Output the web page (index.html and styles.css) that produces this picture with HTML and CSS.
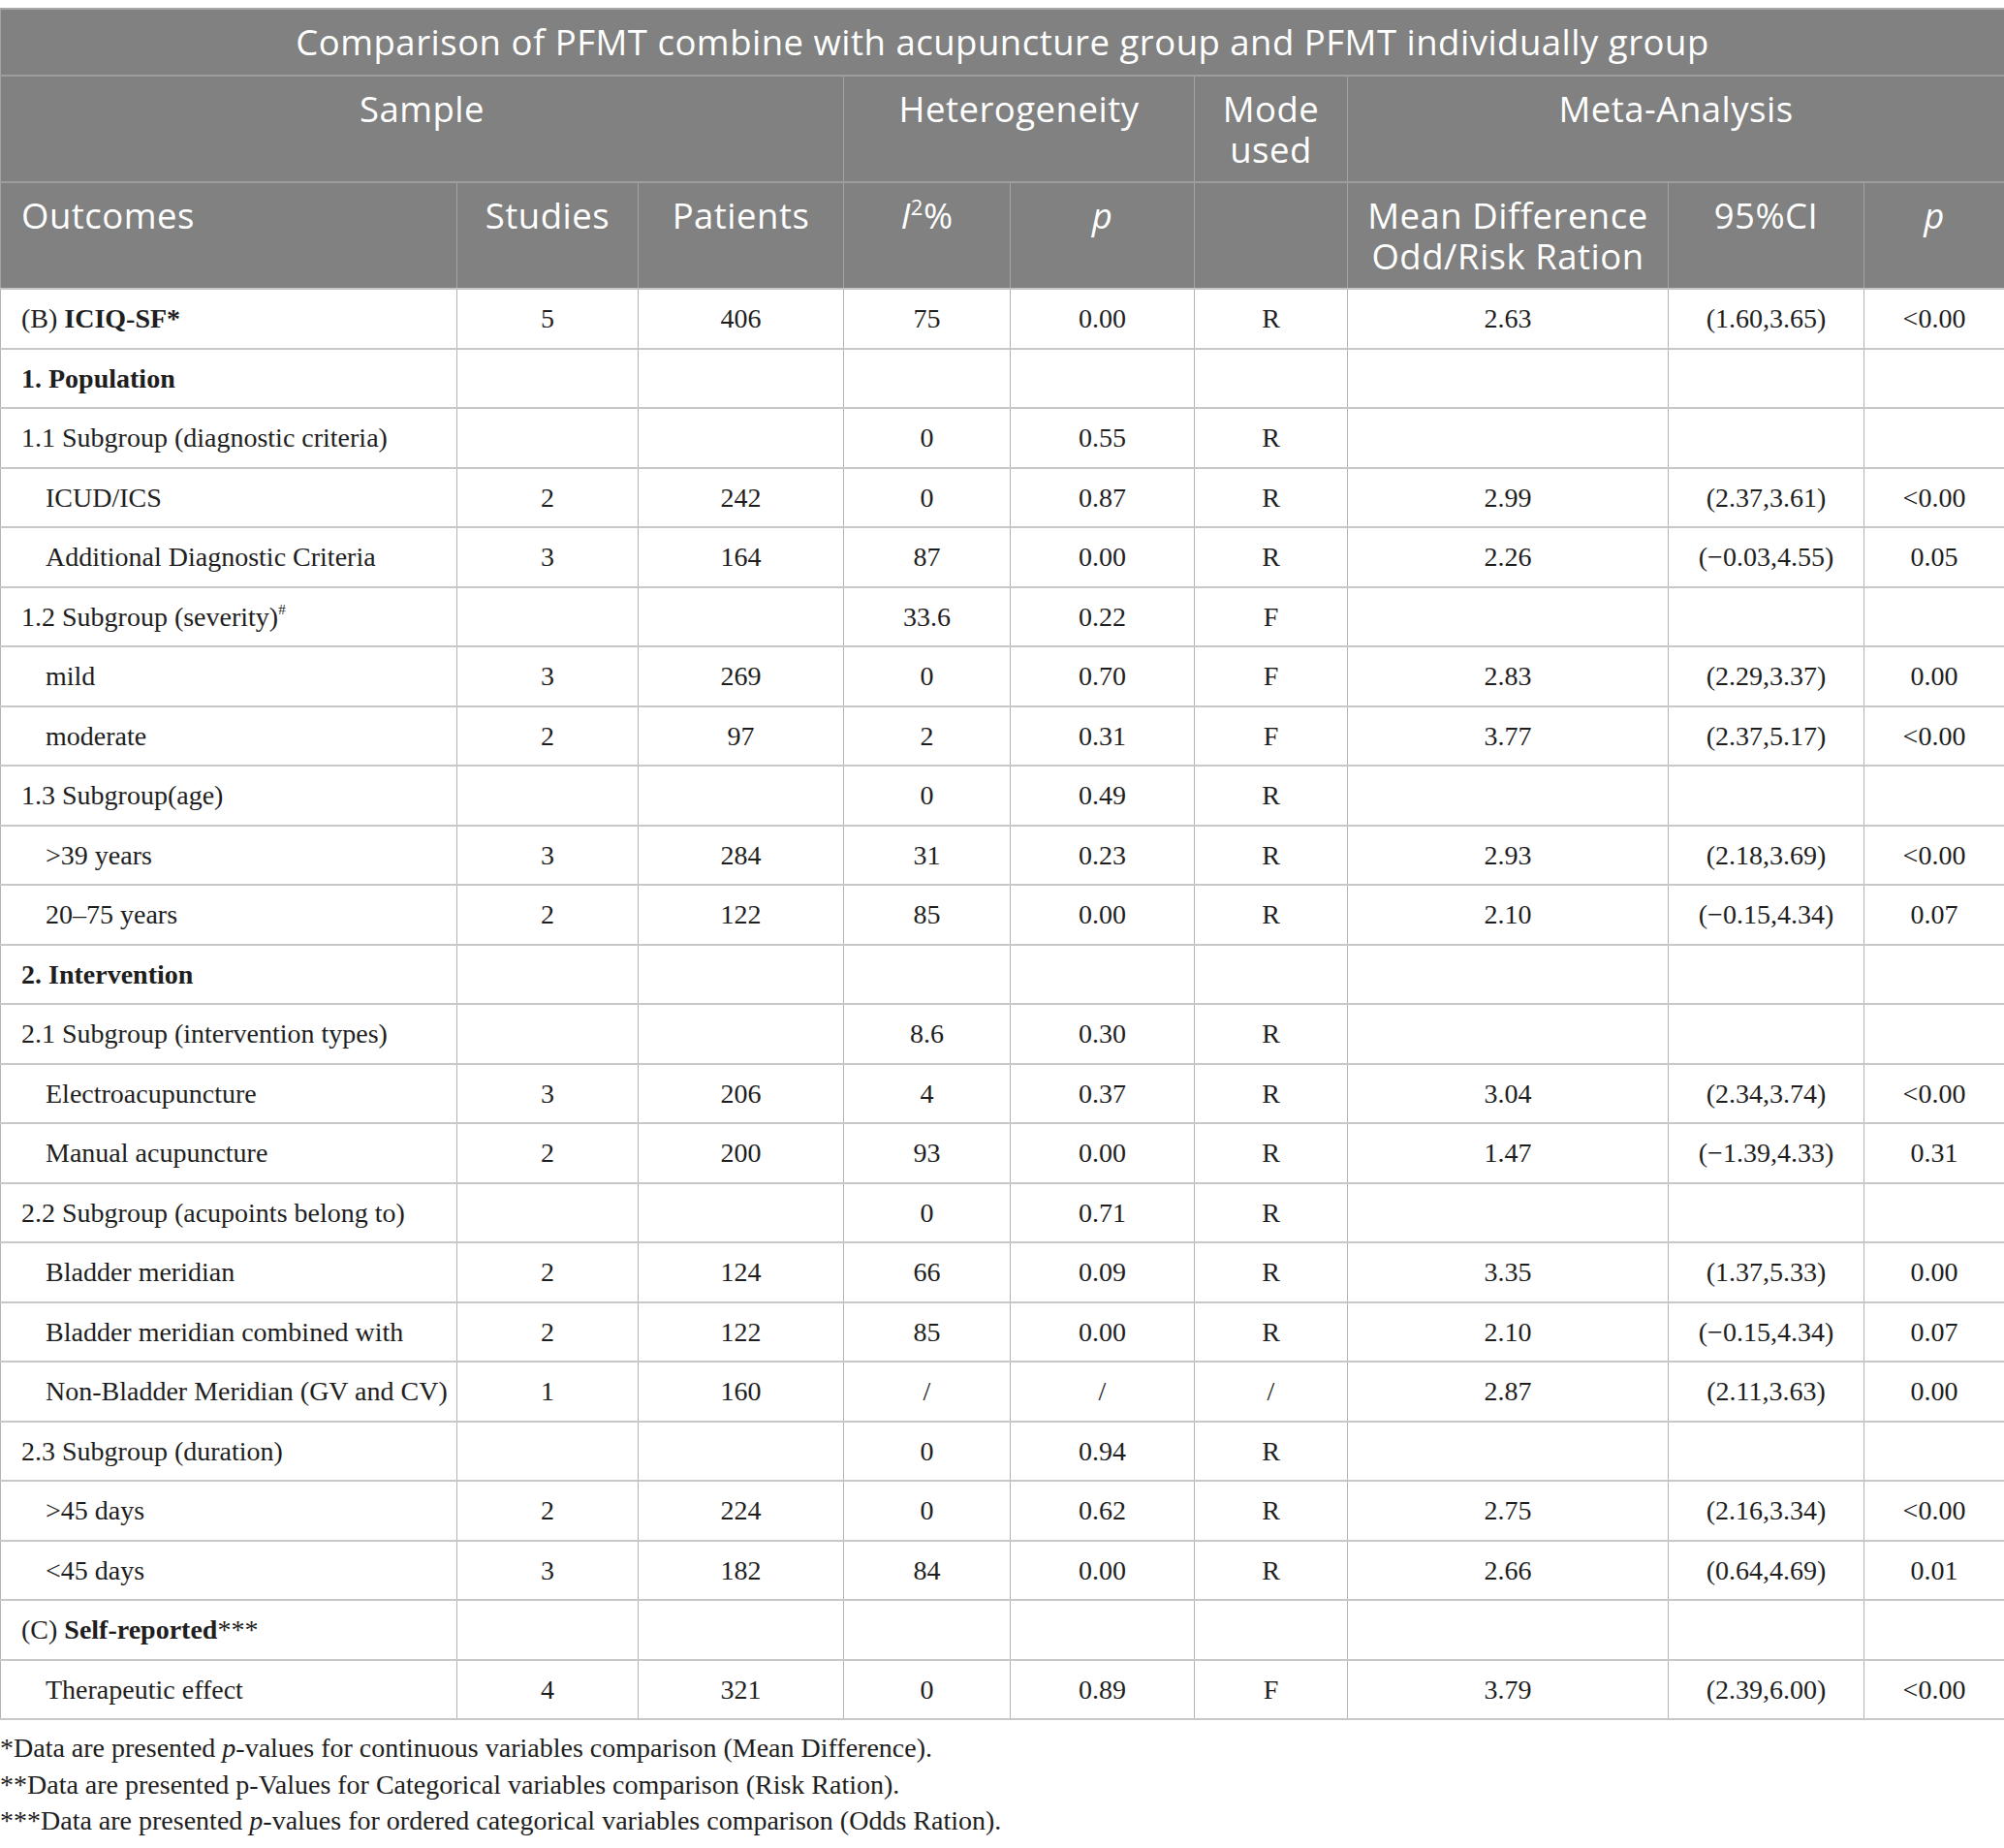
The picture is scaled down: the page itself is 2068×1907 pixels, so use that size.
FILE: index.html
```html
<!DOCTYPE html>
<html lang="en">
<head>
<meta charset="utf-8">
<title>Comparison of PFMT combine with acupuncture group and PFMT individually group</title>
<link rel="stylesheet" href="styles.css">
</head>
<body>
<div class="page">
<table class="meta">
  <colgroup>
    <col class="c-out"><col class="c-stu"><col class="c-pat"><col class="c-i2"><col class="c-p"><col class="c-mode"><col class="c-md"><col class="c-ci"><col class="c-p2">
  </colgroup>
  <thead>
    <tr class="h-title"><th colspan="9">Comparison of PFMT combine with acupuncture group and PFMT individually group</th></tr>
    <tr class="h-group">
      <th colspan="3">Sample</th>
      <th colspan="2">Heterogeneity</th>
      <th>Mode<br>used</th>
      <th colspan="3">Meta-Analysis</th>
    </tr>
    <tr class="h-cols">
      <th class="left">Outcomes</th>
      <th>Studies</th>
      <th>Patients</th>
      <th><i>I</i><sup>2</sup>%</th>
      <th><i>p</i></th>
      <th></th>
      <th>Mean Difference<br>Odd/Risk Ration</th>
      <th>95%CI</th>
      <th><i>p</i></th>
    </tr>
  </thead>
  <tbody>
    <tr><td class="lab">(B) <b>ICIQ-SF*</b></td><td>5</td><td>406</td><td>75</td><td>0.00</td><td>R</td><td>2.63</td><td>(1.60,3.65)</td><td>&lt;0.00</td></tr>
    <tr><td class="lab"><b>1. Population</b></td><td></td><td></td><td></td><td></td><td></td><td></td><td></td><td></td></tr>
    <tr><td class="lab">1.1 Subgroup (diagnostic criteria)</td><td></td><td></td><td>0</td><td>0.55</td><td>R</td><td></td><td></td><td></td></tr>
    <tr><td class="lab ind">ICUD/ICS</td><td>2</td><td>242</td><td>0</td><td>0.87</td><td>R</td><td>2.99</td><td>(2.37,3.61)</td><td>&lt;0.00</td></tr>
    <tr><td class="lab ind">Additional Diagnostic Criteria</td><td>3</td><td>164</td><td>87</td><td>0.00</td><td>R</td><td>2.26</td><td>(−0.03,4.55)</td><td>0.05</td></tr>
    <tr><td class="lab">1.2 Subgroup (severity)<sup class="hash">#</sup></td><td></td><td></td><td>33.6</td><td>0.22</td><td>F</td><td></td><td></td><td></td></tr>
    <tr><td class="lab ind">mild</td><td>3</td><td>269</td><td>0</td><td>0.70</td><td>F</td><td>2.83</td><td>(2.29,3.37)</td><td>0.00</td></tr>
    <tr><td class="lab ind">moderate</td><td>2</td><td>97</td><td>2</td><td>0.31</td><td>F</td><td>3.77</td><td>(2.37,5.17)</td><td>&lt;0.00</td></tr>
    <tr><td class="lab">1.3 Subgroup(age)</td><td></td><td></td><td>0</td><td>0.49</td><td>R</td><td></td><td></td><td></td></tr>
    <tr><td class="lab ind">&gt;39 years</td><td>3</td><td>284</td><td>31</td><td>0.23</td><td>R</td><td>2.93</td><td>(2.18,3.69)</td><td>&lt;0.00</td></tr>
    <tr><td class="lab ind">20–75 years</td><td>2</td><td>122</td><td>85</td><td>0.00</td><td>R</td><td>2.10</td><td>(−0.15,4.34)</td><td>0.07</td></tr>
    <tr><td class="lab"><b>2. Intervention</b></td><td></td><td></td><td></td><td></td><td></td><td></td><td></td><td></td></tr>
    <tr><td class="lab">2.1 Subgroup (intervention types)</td><td></td><td></td><td>8.6</td><td>0.30</td><td>R</td><td></td><td></td><td></td></tr>
    <tr><td class="lab ind">Electroacupuncture</td><td>3</td><td>206</td><td>4</td><td>0.37</td><td>R</td><td>3.04</td><td>(2.34,3.74)</td><td>&lt;0.00</td></tr>
    <tr><td class="lab ind">Manual acupuncture</td><td>2</td><td>200</td><td>93</td><td>0.00</td><td>R</td><td>1.47</td><td>(−1.39,4.33)</td><td>0.31</td></tr>
    <tr><td class="lab">2.2 Subgroup (acupoints belong to)</td><td></td><td></td><td>0</td><td>0.71</td><td>R</td><td></td><td></td><td></td></tr>
    <tr><td class="lab ind">Bladder meridian</td><td>2</td><td>124</td><td>66</td><td>0.09</td><td>R</td><td>3.35</td><td>(1.37,5.33)</td><td>0.00</td></tr>
    <tr><td class="lab ind">Bladder meridian combined with</td><td>2</td><td>122</td><td>85</td><td>0.00</td><td>R</td><td>2.10</td><td>(−0.15,4.34)</td><td>0.07</td></tr>
    <tr><td class="lab ind">Non-Bladder Meridian (GV and CV)</td><td>1</td><td>160</td><td>/</td><td>/</td><td>/</td><td>2.87</td><td>(2.11,3.63)</td><td>0.00</td></tr>
    <tr><td class="lab">2.3 Subgroup (duration)</td><td></td><td></td><td>0</td><td>0.94</td><td>R</td><td></td><td></td><td></td></tr>
    <tr><td class="lab ind">&gt;45 days</td><td>2</td><td>224</td><td>0</td><td>0.62</td><td>R</td><td>2.75</td><td>(2.16,3.34)</td><td>&lt;0.00</td></tr>
    <tr><td class="lab ind">&lt;45 days</td><td>3</td><td>182</td><td>84</td><td>0.00</td><td>R</td><td>2.66</td><td>(0.64,4.69)</td><td>0.01</td></tr>
    <tr><td class="lab">(C) <b>Self-reported</b>***</td><td></td><td></td><td></td><td></td><td></td><td></td><td></td><td></td></tr>
    <tr><td class="lab ind">Therapeutic effect</td><td>4</td><td>321</td><td>0</td><td>0.89</td><td>F</td><td>3.79</td><td>(2.39,6.00)</td><td>&lt;0.00</td></tr>
  </tbody>
</table>
<div class="notes">
  <p>*Data are presented <i>p</i>-values for continuous variables comparison (Mean Difference).</p>
  <p>**Data are presented p-Values for Categorical variables comparison (Risk Ration).</p>
  <p>***Data are presented <i>p</i>-values for ordered categorical variables comparison (Odds Ration).</p>
</div>
</div>
</body>
</html>
```

FILE: styles.css
```css
html, body {
  margin: 0;
  padding: 0;
  background: #ffffff;
}

.page {
  padding-top: 8px;
}

.meta {
  width: 2068px;
  border-collapse: collapse;
  table-layout: fixed;
}

.c-out { width: 471px; }
.c-stu { width: 187px; }
.c-pat { width: 212px; }
.c-i2 { width: 172px; }
.c-p { width: 190px; }
.c-mode { width: 158px; }
.c-md { width: 331px; }
.c-ci { width: 202px; }
.c-p2 { width: 145px; }

.meta th {
  background: #808180;
  color: #ffffff;
  font-family: "Open Sans", "Liberation Sans", sans-serif;
  font-weight: 400;
  font-size: 36.5px;
  letter-spacing: 0.5px;
  line-height: 42px;
  padding: 12px 8px;
  vertical-align: top;
  text-align: center;
  border: 1px solid #a4a4a4;
  border-top: 2px solid #9d9d9d;
}

.meta th.left {
  text-align: left;
  padding-left: 21px;
}

.meta th sup {
  font-size: 22px;
  line-height: 0;
  vertical-align: 14px;
}

.h-title th {
  border-top: 2px solid #a8a8a8;
  padding-top: 12px;
  padding-bottom: 13px;
}

.h-cols th {
  border-bottom: 2px solid #c4c4c4;
}

.meta td {
  font-family: "Liberation Serif", "Times New Roman", serif;
  font-size: 28px;
  color: #1e1e1e;
  text-align: center;
  vertical-align: middle;
  height: 58.5px;
  padding: 1px 6px 0;
  border-left: 1px solid #b3b3b3;
  border-right: 1px solid #b3b3b3;
  border-bottom: 2px solid #c8c8c8;
  white-space: nowrap;
}

.meta td.lab {
  text-align: left;
  padding-left: 21px;
}

.meta td.ind {
  padding-left: 46px;
}

.meta td b {
  font-weight: 700;
}

.hash {
  font-size: 15px;
  line-height: 0;
  vertical-align: 12px;
}

.notes {
  padding-top: 10px;
}

.notes p {
  margin: 0;
  font-family: "Liberation Serif", "Times New Roman", serif;
  font-size: 28px;
  line-height: 37.5px;
  color: #1e1e1e;
}
```
